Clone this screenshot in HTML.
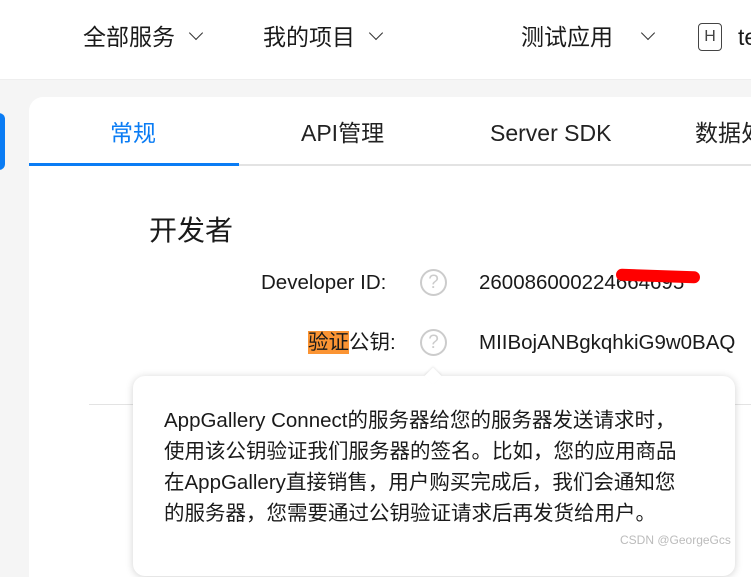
<!DOCTYPE html>
<html><head><meta charset="utf-8"><style>
*{margin:0;padding:0;box-sizing:border-box}
body{width:751px;height:554px;overflow:hidden;background:#f5f5f5;font-family:"Liberation Sans","Noto Sans CJK SC",sans-serif;color:#1a1a1a;position:relative}
.top{position:absolute;left:0;top:0;width:751px;height:80px;background:#fff;border-bottom:1px solid #eee}
.t{position:absolute;font-size:23px;top:22px;line-height:30px;white-space:nowrap}
.chev{position:absolute;width:10px;height:10px;border-right:1.5px solid #333;border-bottom:1.5px solid #333;transform:rotate(45deg)}
.card{position:absolute;left:29px;top:97px;width:740px;height:480px;background:#fff;border-radius:14px 0 0 0}
.tab{position:absolute;top:118px;line-height:30px;font-size:23px;white-space:nowrap;color:#222}
.lbl{position:absolute;font-size:20.5px;line-height:26px;white-space:nowrap}
.q{position:absolute;width:27px;height:27px;border:2px solid #ccc;border-radius:50%;color:#ccc;font-size:19px;text-align:center;line-height:23px}
.tip{position:absolute;left:133px;top:376px;width:602px;height:200px;background:#fff;border-radius:12px;box-shadow:0 1px 8px rgba(0,0,0,.18)}
.tip p{position:absolute;left:31px;top:29px;font-size:20.5px;line-height:31px;white-space:nowrap;color:#1a1a1a}
</style></head><body>
<div class="top">
<div class="t" style="left:83px">全部服务</div><div class="chev" style="left:191px;top:28px"></div>
<div class="t" style="left:263px">我的项目</div><div class="chev" style="left:371px;top:28px"></div>
<div class="t" style="left:521px">测试应用</div><div class="chev" style="left:643px;top:28px"></div>
<div style="position:absolute;left:698px;top:23px;width:24px;height:28px;border:1.5px solid #444;border-radius:4px;font-size:16px;text-align:center;line-height:25px;color:#444">H</div>
<div class="t" style="left:738px">te</div>
</div>
<div style="position:absolute;left:-8px;top:113px;width:13px;height:57px;background:#0a7cf4;border-radius:6px"></div>
<div class="card"></div>
<div class="tab" style="left:110px;color:#0a7cf4">常规</div>
<div class="tab" style="left:301px">API管理</div>
<div class="tab" style="left:490px">Server SDK</div>
<div class="tab" style="left:695px">数据处</div>
<div style="position:absolute;left:239px;top:164px;width:512px;height:2px;background:#e3e3e3"></div>
<div style="position:absolute;left:29px;top:163px;width:210px;height:3px;background:#0a7cf4"></div>
<div style="position:absolute;left:149px;top:212px;font-size:28px;line-height:38px">开发者</div>
<div class="lbl" style="left:261px;top:270px">Developer ID:</div>
<div class="q" style="left:420px;top:269px">?</div>
<div class="lbl" style="left:479px;top:270px">260086000224664695</div>
<div style="position:absolute;left:616px;top:270px;width:84px;height:12px;background:#f00;border-radius:6px;transform:rotate(2deg)"></div>
<div class="lbl" style="left:308px;top:330px"><span style="background:#fb9433">验证</span>公钥:</div>
<div class="q" style="left:420px;top:329px">?</div>
<div class="lbl" style="left:479px;top:330px">MIIBojANBgkqhkiG9w0BAQ</div>
<div style="position:absolute;left:89px;top:404px;width:662px;height:1px;background:#e3e3e3"></div>
<div class="tip"><p>AppGallery Connect的服务器给您的服务器发送请求时，<br>使用该公钥验证我们服务器的签名。比如，您的应用商品<br>在AppGallery直接销售，用户购买完成后，我们会通知您<br>的服务器，您需要通过公钥验证请求后再发货给用户。</p></div>
<div style="position:absolute;left:427px;top:370px;width:12px;height:12px;background:#fff;transform:rotate(45deg);box-shadow:-1px -1px 2px rgba(0,0,0,.08)"></div>
<div style="position:absolute;left:620px;top:533px;font-size:12px;color:#bbb">CSDN @GeorgeGcs</div>
</body></html>
